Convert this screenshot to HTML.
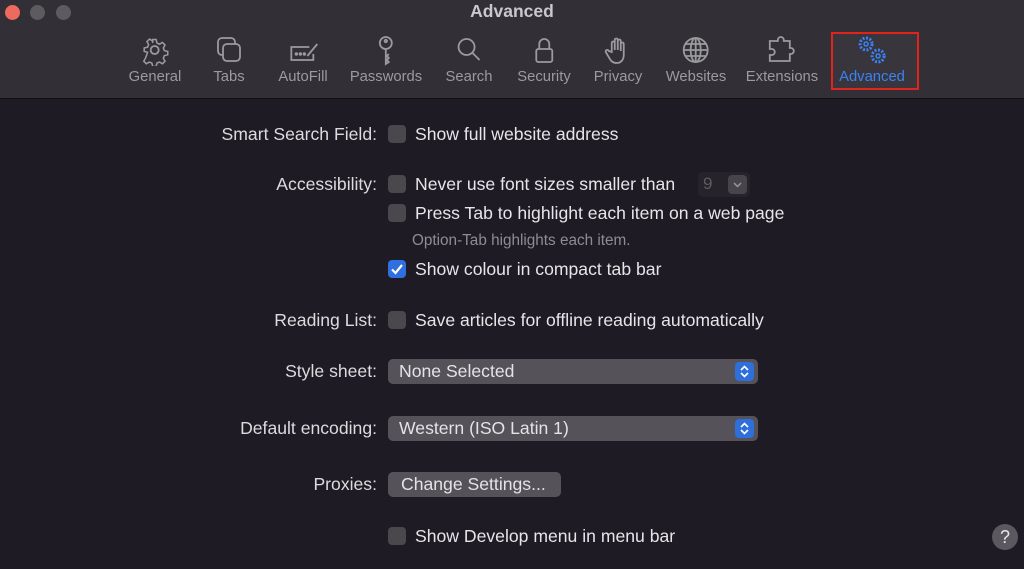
<!DOCTYPE html>
<html><head><meta charset="utf-8"><style>
*{margin:0;padding:0;box-sizing:border-box}
body{width:1024px;height:569px;background:#1f1b24;font-family:"Liberation Sans",sans-serif;position:relative;overflow:hidden;color:#e4e3e6}
.tb{position:absolute;left:0;top:0;width:1024px;height:99px;background:#323036;border-bottom:1px solid #111}
.dot{position:absolute;top:5px;width:15px;height:15px;border-radius:50%;background:#5d5b60}
.title{position:absolute;top:1px;left:0;width:1024px;text-align:center;font-weight:bold;font-size:17.5px;color:#c9c8cc}
.it{position:absolute;top:34px;text-align:center;font-size:14.8px;color:#9b9a9e;transform:translateX(-50%);white-space:nowrap;line-height:16px}
.it svg{display:block;margin:0 auto 3px;width:32px;height:32px;stroke:#9b9a9e;fill:none;stroke-width:1.8}
.lab{position:absolute;right:647px;font-size:17.6px;color:#dcdbde;white-space:nowrap}
.cb{position:absolute;left:388px;width:18px;height:18px;border-radius:4px;background:#4a474d}
.tx{position:absolute;left:415px;font-size:17.6px;white-space:nowrap;color:#e6e5e8}
.pop{position:absolute;left:388px;width:370px;height:25px;border-radius:5px;background:#55525a;font-size:17.6px;padding:2px 0 0 11px}
.pop i{position:absolute;right:4px;top:3px;width:19px;height:19px;border-radius:4px;background:#2f6fd9}
.pop i svg{display:block}
</style></head><body>
<div class="tb">
<div class="dot" style="left:5px;background:#ec6a5e"></div>
<div class="dot" style="left:30px"></div>
<div class="dot" style="left:56px"></div>
<div class="title">Advanced</div>
<div class="it" style="left:155px"><svg viewBox="0 0 32 32"><path d="M14 4h4l1 4 3 1.5 3.5-2 3 3-2 3.5 1.2 3 4 1v4l-4 1-1.2 3 2 3.5-3 3-3.5-2-3 1.2-1 4h-4l-1-4-3-1.2-3.5 2-3-3 2-3.5L8 19l-4-1v-4l4-1 1.2-3-2-3.5 3-3 3.5 2L14 8z" transform="scale(.85) translate(2.5 2.5)"/><circle cx="16" cy="16" r="4"/></svg>General</div>
<div class="it" style="left:229px"><svg viewBox="0 0 32 32"><rect x="5" y="4" width="17" height="17" rx="4"/><rect x="10" y="10" width="17" height="17" rx="4" fill="#323036"/></svg>Tabs</div>
<div class="it" style="left:303px"><svg viewBox="0 0 32 32"><path d="M22 13H4v13h22v-6"/><path d="M20 22l10-12"/><circle cx="9" cy="20" r=".8" fill="#9b9a9e"/><circle cx="13" cy="20" r=".8" fill="#9b9a9e"/><circle cx="17" cy="20" r=".8" fill="#9b9a9e"/></svg>AutoFill</div>
<div class="it" style="left:386px"><svg viewBox="0 0 32 32"><circle cx="16" cy="9" r="6"/><circle cx="16" cy="7" r="1.2"/><path d="M16 15v15l3-2-2-2 2-2-2-2 2-2"/></svg>Passwords</div>
<div class="it" style="left:469px"><svg viewBox="0 0 32 32"><circle cx="14" cy="13" r="8"/><path d="M20 19l7 7"/></svg>Search</div>
<div class="it" style="left:544px"><svg viewBox="0 0 32 32"><rect x="8" y="15" width="16" height="13" rx="2"/><path d="M11 15v-5a5 5 0 0110 0v5"/></svg>Security</div>
<div class="it" style="left:618px"><svg viewBox="0 0 32 32"><path d="M10 18V9a1.5 1.5 0 013 0v7V6a1.5 1.5 0 013 0v10V7a1.5 1.5 0 013 0v10V10a1.5 1.5 0 013 0v11c0 5-3 8-7 8s-6-2-8-6l-3-5a1.5 1.5 0 013-1z"/></svg>Privacy</div>
<div class="it" style="left:696px"><svg viewBox="0 0 32 32"><circle cx="16" cy="16" r="12"/><ellipse cx="16" cy="16" rx="5" ry="12"/><path d="M4 16h24M6 10h20M6 22h20M16 4v24"/></svg>Websites</div>
<div class="it" style="left:782px"><svg viewBox="0 0 32 32"><path d="M4 7h8v-1a3 3 0 016 0v1h6v7h1a3 3 0 010 6h-1v7H4v-6h2a3 3 0 000-6H4z"/></svg>Extensions</div>
<div style="position:absolute;left:831px;top:32px;width:88px;height:58px;border:2px solid #e0241b;background:#38363c"></div>
<div class="it" style="left:872px;color:#3a82f6"><svg viewBox="0 0 32 32" style="stroke:#3a82f6;stroke-width:1.5"><circle cx="10" cy="10" r="6" stroke-dasharray="2 1.5" stroke-width="3"/><circle cx="10" cy="10" r="2"/><circle cx="22" cy="22" r="6" stroke-dasharray="2 1.5" stroke-width="3"/><circle cx="22" cy="22" r="2"/></svg>Advanced</div>
</div>

<div class="lab" style="top:124px">Smart Search Field:</div>
<div class="cb" style="top:125px"></div><div class="tx" style="top:124px">Show full website address</div>

<div class="lab" style="top:174px">Accessibility:</div>
<div class="cb" style="top:175px"></div><div class="tx" style="top:174px">Never use font sizes smaller than</div>
<div style="position:absolute;left:698px;top:172px;width:52px;height:25px;border-radius:5px;background:#26232a;font-size:17px;color:#5e5c62;padding:2px 0 0 5px">9<span style="position:absolute;right:3px;top:3px;width:19px;height:19px;border-radius:4px;background:#47444b"><svg viewBox="0 0 19 19" width="19" height="19"><path d="M6 8l3.5 3.5L13 8" stroke="#9a989d" stroke-width="1.5" fill="none"/></svg></span></div>
<div class="cb" style="top:204px"></div><div class="tx" style="top:203px">Press Tab to highlight each item on a web page</div>
<div class="tx" style="top:232px;left:412px;font-size:15.3px;color:#8e8c92">Option-Tab highlights each item.</div>
<div class="cb" style="top:260px;background:#2f6fe0"><svg viewBox="0 0 18 18" width="18" height="18"><path d="M4 9.5l3.5 3.5L14 5" stroke="#fff" stroke-width="2.2" fill="none"/></svg></div><div class="tx" style="top:259px">Show colour in compact tab bar</div>

<div class="lab" style="top:310px">Reading List:</div>
<div class="cb" style="top:311px"></div><div class="tx" style="top:310px">Save articles for offline reading automatically</div>

<div class="lab" style="top:361px">Style sheet:</div>
<div class="pop" style="top:359px">None Selected<i><svg viewBox="0 0 19 19" width="19" height="19"><path d="M6 8l3.5-3.5L13 8M6 11l3.5 3.5L13 11" stroke="#fff" stroke-width="1.6" fill="none"/></svg></i></div>
<div class="lab" style="top:418px">Default encoding:</div>
<div class="pop" style="top:416px">Western (ISO Latin 1)<i><svg viewBox="0 0 19 19" width="19" height="19"><path d="M6 8l3.5-3.5L13 8M6 11l3.5 3.5L13 11" stroke="#fff" stroke-width="1.6" fill="none"/></svg></i></div>

<div class="lab" style="top:474px">Proxies:</div>
<div class="pop" style="top:472px;width:173px;padding-left:13px">Change Settings...</div>

<div class="cb" style="top:527px"></div><div class="tx" style="top:526px">Show Develop menu in menu bar</div>

<div style="position:absolute;left:992px;top:524px;width:26px;height:26px;border-radius:50%;background:#5b585f;color:#e8e8ea;font-size:18px;text-align:center;line-height:26px">?</div>
</body></html>
